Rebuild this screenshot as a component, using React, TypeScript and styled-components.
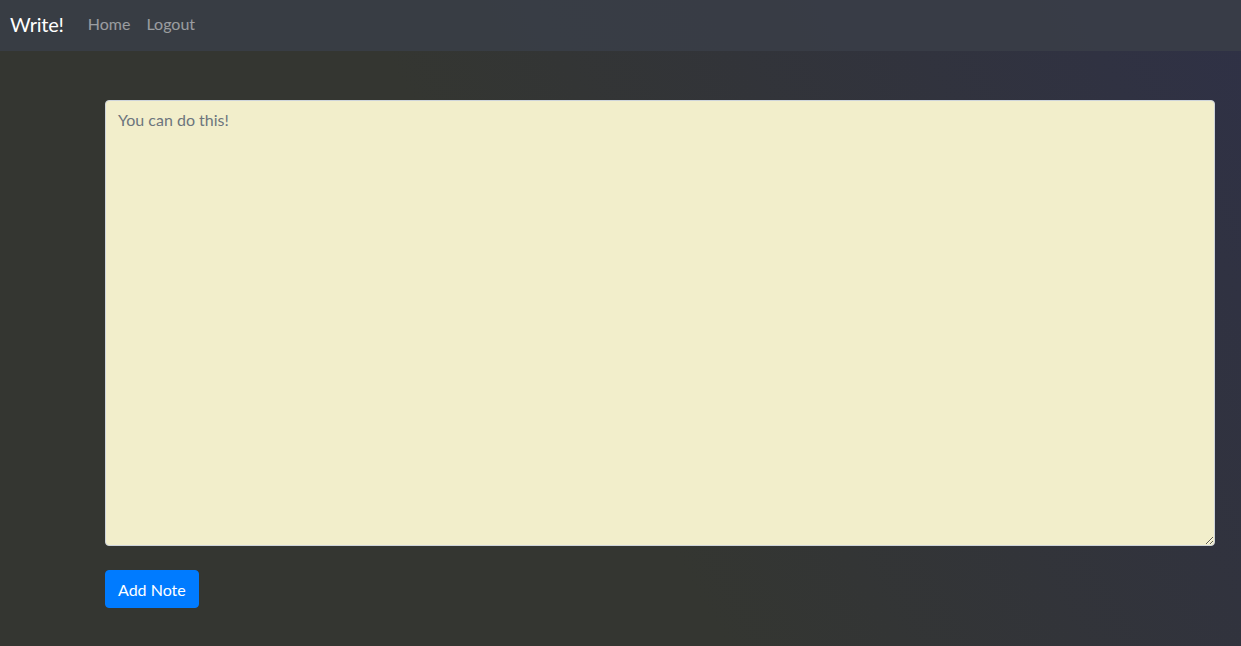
import styled, { createGlobalStyle } from "styled-components";

const GlobalStyle = createGlobalStyle`
  html, body {
    margin: 0;
    padding: 0;
  }
  body {
    min-height: 100vh;
    font-family: "Lato", "Open Sans", "Liberation Sans", sans-serif;
    background: linear-gradient(60deg, #343631 0%, #343631 45%, #2f3146 100%);
    background-attachment: fixed;
  }
`;

const App: React.FC = () => {
  return (
    <>
      <GlobalStyle />
      <Navbar>
        <Brand href="#">Write!</Brand>
        <NavList>
          <NavLink href="#">Home</NavLink>
          <NavLink href="#">Logout</NavLink>
        </NavList>
      </Navbar>
      <Main>
        <NoteForm onSubmit={(e) => e.preventDefault()}>
          <NoteInput placeholder="You can do this!" />
          <SubmitButton type="submit">Add Note</SubmitButton>
        </NoteForm>
      </Main>
    </>
  );
};

export default App;

const Navbar = styled.nav`
  display: flex;
  align-items: center;
  height: 51px;
  padding: 0 10px 4px;
  box-sizing: border-box;
  background: rgba(57, 62, 72, 0.85);
`;

const Brand = styled.a`
  color: #fff;
  font-size: 20px;
  text-decoration: none;
  margin-right: 24px;
  letter-spacing: -0.2px;
`;

const NavList = styled.div`
  display: flex;
  gap: 16px;
`;

const NavLink = styled.a`
  color: rgba(255, 255, 255, 0.5);
  font-size: 16px;
  text-decoration: none;
`;

const Main = styled.main`
  padding: 49px 0 0 105px;
`;

const NoteForm = styled.form`
  display: flex;
  flex-direction: column;
  align-items: flex-start;
  gap: 24px;
  width: 1110px;
`;

const NoteInput = styled.textarea`
  width: 100%;
  height: 446px;
  box-sizing: border-box;
  padding: 7px 12px;
  background: #f2eecb;
  border: 1px solid #ced4da;
  border-radius: 4px;
  font-family: inherit;
  font-size: 16px;
  line-height: 1.5;
  color: #495057;
  resize: vertical;
  outline: none;

  &::placeholder {
    color: #6c757d;
  }
`;

const SubmitButton = styled.button`
  height: 38px;
  padding: 0 12px;
  background: #007bff;
  color: #fff;
  border: 1px solid #007bff;
  border-radius: 4px;
  font-family: inherit;
  font-size: 16px;
  cursor: pointer;
`;
